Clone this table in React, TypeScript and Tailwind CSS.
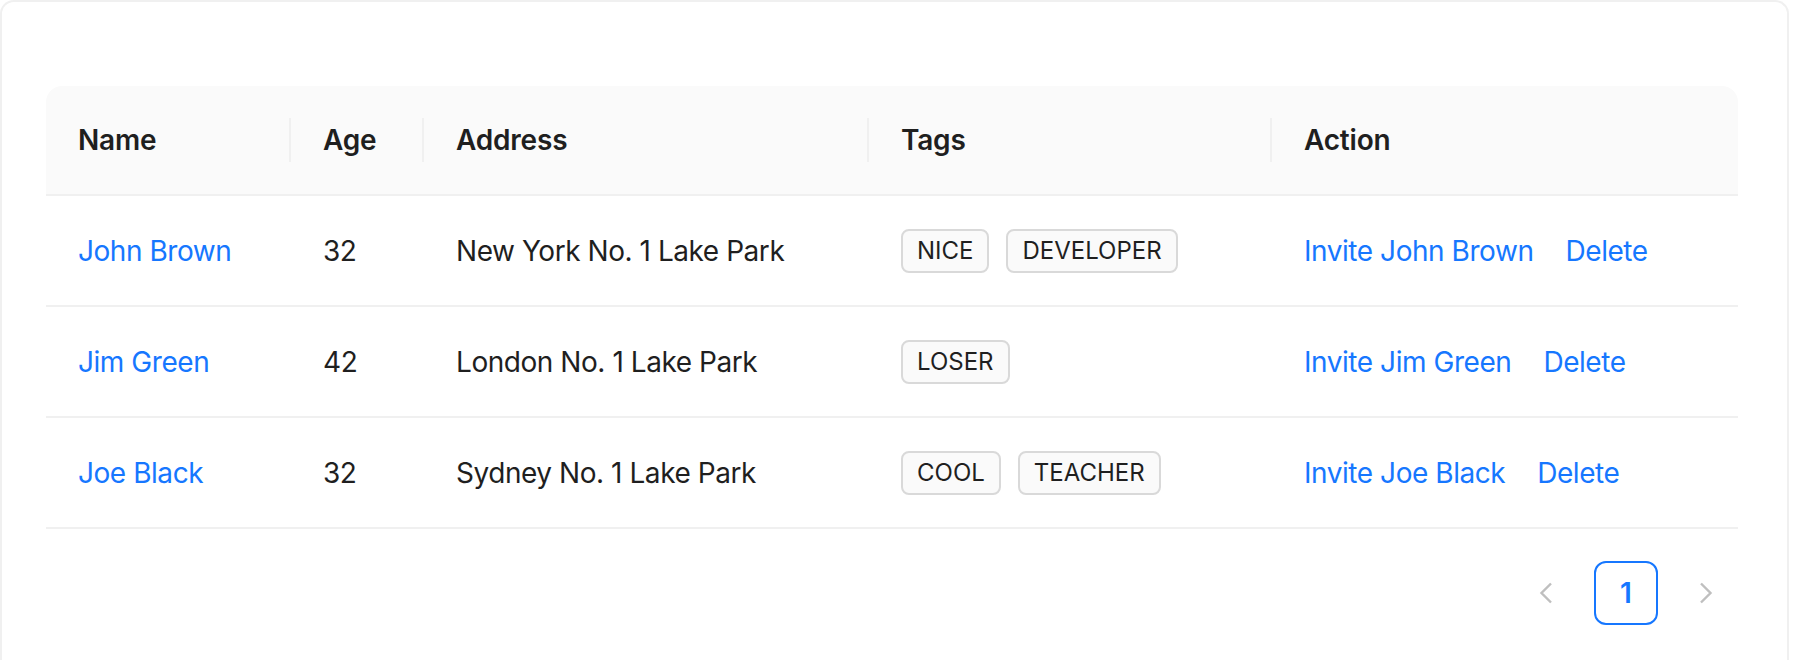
import React from "react";

interface DataType {
  key: string;
  name: string;
  age: number;
  address: string;
  tags: string[];
}

const data: DataType[] = [
  { key: "1", name: "John Brown", age: 32, address: "New York No. 1 Lake Park", tags: ["nice", "developer"] },
  { key: "2", name: "Jim Green", age: 42, address: "London No. 1 Lake Park", tags: ["loser"] },
  { key: "3", name: "Joe Black", age: 32, address: "Sydney No. 1 Lake Park", tags: ["cool", "teacher"] },
];

const cols = "grid grid-cols-[245px_133px_445px_403px_466px]";

function HeaderCell({ title, sep = true, className = "" }: { title: string; sep?: boolean; className?: string }) {
  return (
    <div className={`relative flex items-center px-[32px] bg-[#fafafa] ${className}`}>
      <span className="text-[28px] leading-[44px] font-semibold tracking-[-0.2px] text-[#1f1f1f]">{title}</span>
      {sep && <span className="absolute right-0 top-1/2 -translate-y-1/2 h-[44px] w-[2px] bg-[#f0f0f0]" />}
    </div>
  );
}

function Chevron({ dir }: { dir: "left" | "right" }) {
  return (
    <svg width="14" height="22" viewBox="0 0 14 22" fill="none">
      <polyline
        points={dir === "left" ? "12,1.5 2.5,11 12,20.5" : "2,1.5 11.5,11 2,20.5"}
        stroke="#bfbfbf"
        strokeWidth="2.4"
        strokeLinejoin="miter"
      />
    </svg>
  );
}

export default function App() {
  return (
    <div className="w-[1794px] h-[660px] bg-white overflow-hidden font-['Inter','Noto_Sans',sans-serif]">
      <div className="w-[1789px] h-[660px] border-2 border-b-0 border-[#f0f0f0] rounded-t-[14px] pt-[84px] pl-[44px] pr-[49px]">
        {/* Table header */}
        <div className={`${cols} h-[110px] border-b-2 border-[#f0f0f0]`}>
          <HeaderCell title="Name" className="rounded-tl-[16px]" />
          <HeaderCell title="Age" />
          <HeaderCell title="Address" />
          <HeaderCell title="Tags" />
          <HeaderCell title="Action" sep={false} className="rounded-tr-[16px]" />
        </div>

        {/* Rows */}
        {data.map((row) => (
          <div
            key={row.key}
            className={`${cols} h-[111px] border-b-2 border-[#f0f0f0] text-[28px] leading-[44px] tracking-[-0.45px]`}
          >
            <div className="flex items-center px-[32px] text-[#1677ff]">{row.name}</div>
            <div className="flex items-center px-[32px] text-[#1f1f1f]">{row.age}</div>
            <div className="flex items-center px-[32px] text-[#1f1f1f]">{row.address}</div>
            <div className="flex items-center gap-[17px] px-[32px] tracking-normal">
              {row.tags.map((tag) => (
                <span
                  key={tag}
                  className="h-[44px] px-[14px] border-2 border-[#d9d9d9] bg-[#fafafa] rounded-[8px] text-[24px] leading-[40px] text-[#1f1f1f]"
                >
                  {tag.toUpperCase()}
                </span>
              ))}
            </div>
            <div className="flex items-center gap-[32px] px-[32px] text-[#1677ff]">
              <span>Invite {row.name}</span>
              <span>Delete</span>
            </div>
          </div>
        ))}

        {/* Pagination */}
        <div className="flex justify-end items-center gap-[16px] mt-[32px]">
          <div className="w-[64px] h-[64px] flex items-center justify-center">
            <Chevron dir="left" />
          </div>
          <div className="w-[64px] h-[64px] flex items-center justify-center border-2 border-[#1677ff] rounded-[12px] text-[28px] font-semibold text-[#1677ff]">
            1
          </div>
          <div className="w-[64px] h-[64px] flex items-center justify-center">
            <Chevron dir="right" />
          </div>
        </div>
      </div>
    </div>
  );
}
